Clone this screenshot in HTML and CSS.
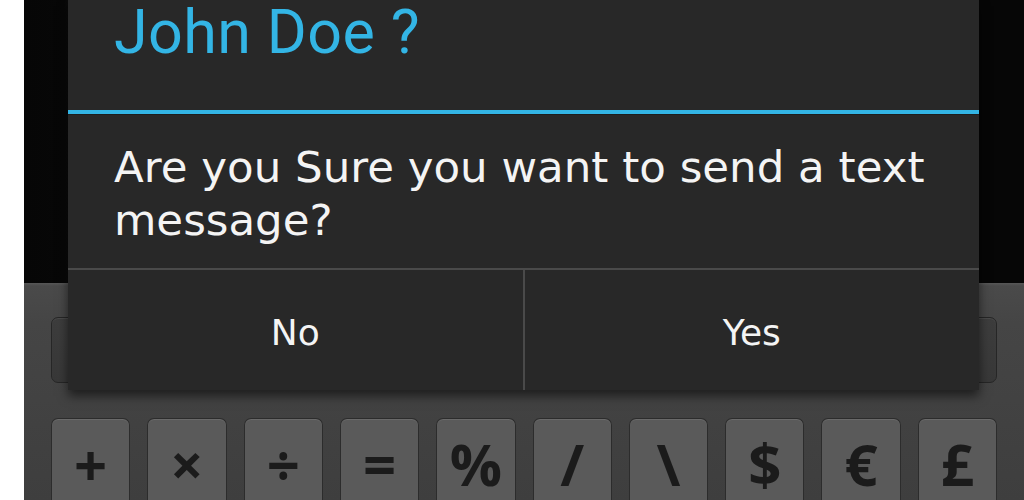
FILE: index.html
```html
<!DOCTYPE html>
<html lang="en">
<head>
<meta charset="utf-8">
<title>Send text dialog</title>
<link rel="stylesheet" href="styles.css">
</head>
<body>
<div class="screen">
  <div class="backdrop"></div>
  <div class="keyboard">
    <div class="kb-row1"><div class="wide-key"></div></div>
    <div class="kb-row2">
      <div class="key"><span class="sym">+</span></div>
      <div class="key"><span class="sym">×</span></div>
      <div class="key"><span class="sym">÷</span></div>
      <div class="key"><span class="sym">=</span></div>
      <div class="key"><span class="sym">%</span></div>
      <div class="key"><span class="sym">/</span></div>
      <div class="key"><span class="sym">\</span></div>
      <div class="key"><span class="sym">$</span></div>
      <div class="key"><span class="sym">€</span></div>
      <div class="key"><span class="sym">£</span></div>
    </div>
  </div>
  <div class="dialog">
    <div class="dialog-title">John Doe ?</div>
    <div class="dialog-body">Are you Sure you want to send a text message?</div>
    <div class="dialog-buttons">
      <div class="dialog-btn">No</div>
      <div class="dialog-btn">Yes</div>
    </div>
  </div>
</div>
</body>
</html>
```

FILE: styles.css
```css
html, body {
  margin: 0;
  padding: 0;
  background: #ffffff;
}

.screen {
  position: relative;
  margin-left: 24px;
  width: 1000px;
  height: 500px;
  overflow: hidden;
  display: flex;
  flex-direction: column;
  font-family: Roboto, "Liberation Sans", sans-serif;
}

.backdrop {
  height: 283px;
  flex: none;
  background: linear-gradient(90deg, #060606 0, #070707 40px, #0a0a0a 44px, #060606 48px, #060606 100%);
}

.keyboard {
  flex: 1;
  padding: 34px 27px 0 27px;
  background: linear-gradient(#575757 0, #4a4a4a 3px, #454545 40px, #3e3e3e 217px);
}

.kb-row1 {
  height: 66px;
}

.wide-key {
  height: 100%;
  box-sizing: border-box;
  border: 1px solid #262626;
  border-radius: 7px;
  background: linear-gradient(#3d3d3d, #383838);
  box-shadow: inset 0 1px 0 #4a4a4a;
}

.kb-row2 {
  margin-top: 35px;
  display: grid;
  grid-template-columns: repeat(10, 1fr);
  column-gap: 17px;
}

.key {
  height: 82px;
  box-sizing: border-box;
  border: 1px solid #2c2c2c;
  border-bottom: 0;
  border-radius: 7px 7px 0 0;
  background: #5a5a5a;
  box-shadow: inset 0 1px 0 #6a6a6a;
  display: flex;
  justify-content: center;
  align-items: flex-start;
  padding-top: 16px;
}

.sym {
  font-family: "Open Sans", "DejaVu Sans", sans-serif;
  font-weight: 700;
  font-size: 58px;
  line-height: 58px;
  color: #1b1b1b;
}

.dialog {
  position: absolute;
  left: 44px;
  top: 0;
  width: 911px;
  background: #282828;
  box-shadow: 0 6px 10px rgba(0, 0, 0, 0.55);
}

.dialog-title {
  height: 114px;
  box-sizing: border-box;
  padding: 2px 0 0 46px;
  font-size: 61px;
  line-height: 60px;
  letter-spacing: 0.4px;
  color: #33b5e5;
  border-bottom: 4px solid #33b5e5;
}

.dialog-body {
  height: 154px;
  box-sizing: border-box;
  border-top: 1px solid #1e1e1e;
  padding: 26px 30px 0 46px;
  font-family: "DejaVu Sans", sans-serif;
  font-size: 43.5px;
  line-height: 53px;
  color: #f4f4f4;
}

.dialog-buttons {
  display: flex;
  height: 122px;
  border-top: 2px solid #4a4a4a;
  box-sizing: border-box;
}

.dialog-btn {
  flex: 1;
  display: flex;
  align-items: center;
  justify-content: center;
  padding-top: 4px;
  font-family: "DejaVu Sans", sans-serif;
  font-size: 36px;
  color: #f4f4f4;
}

.dialog-btn + .dialog-btn {
  border-left: 2px solid #4a4a4a;
}
```
